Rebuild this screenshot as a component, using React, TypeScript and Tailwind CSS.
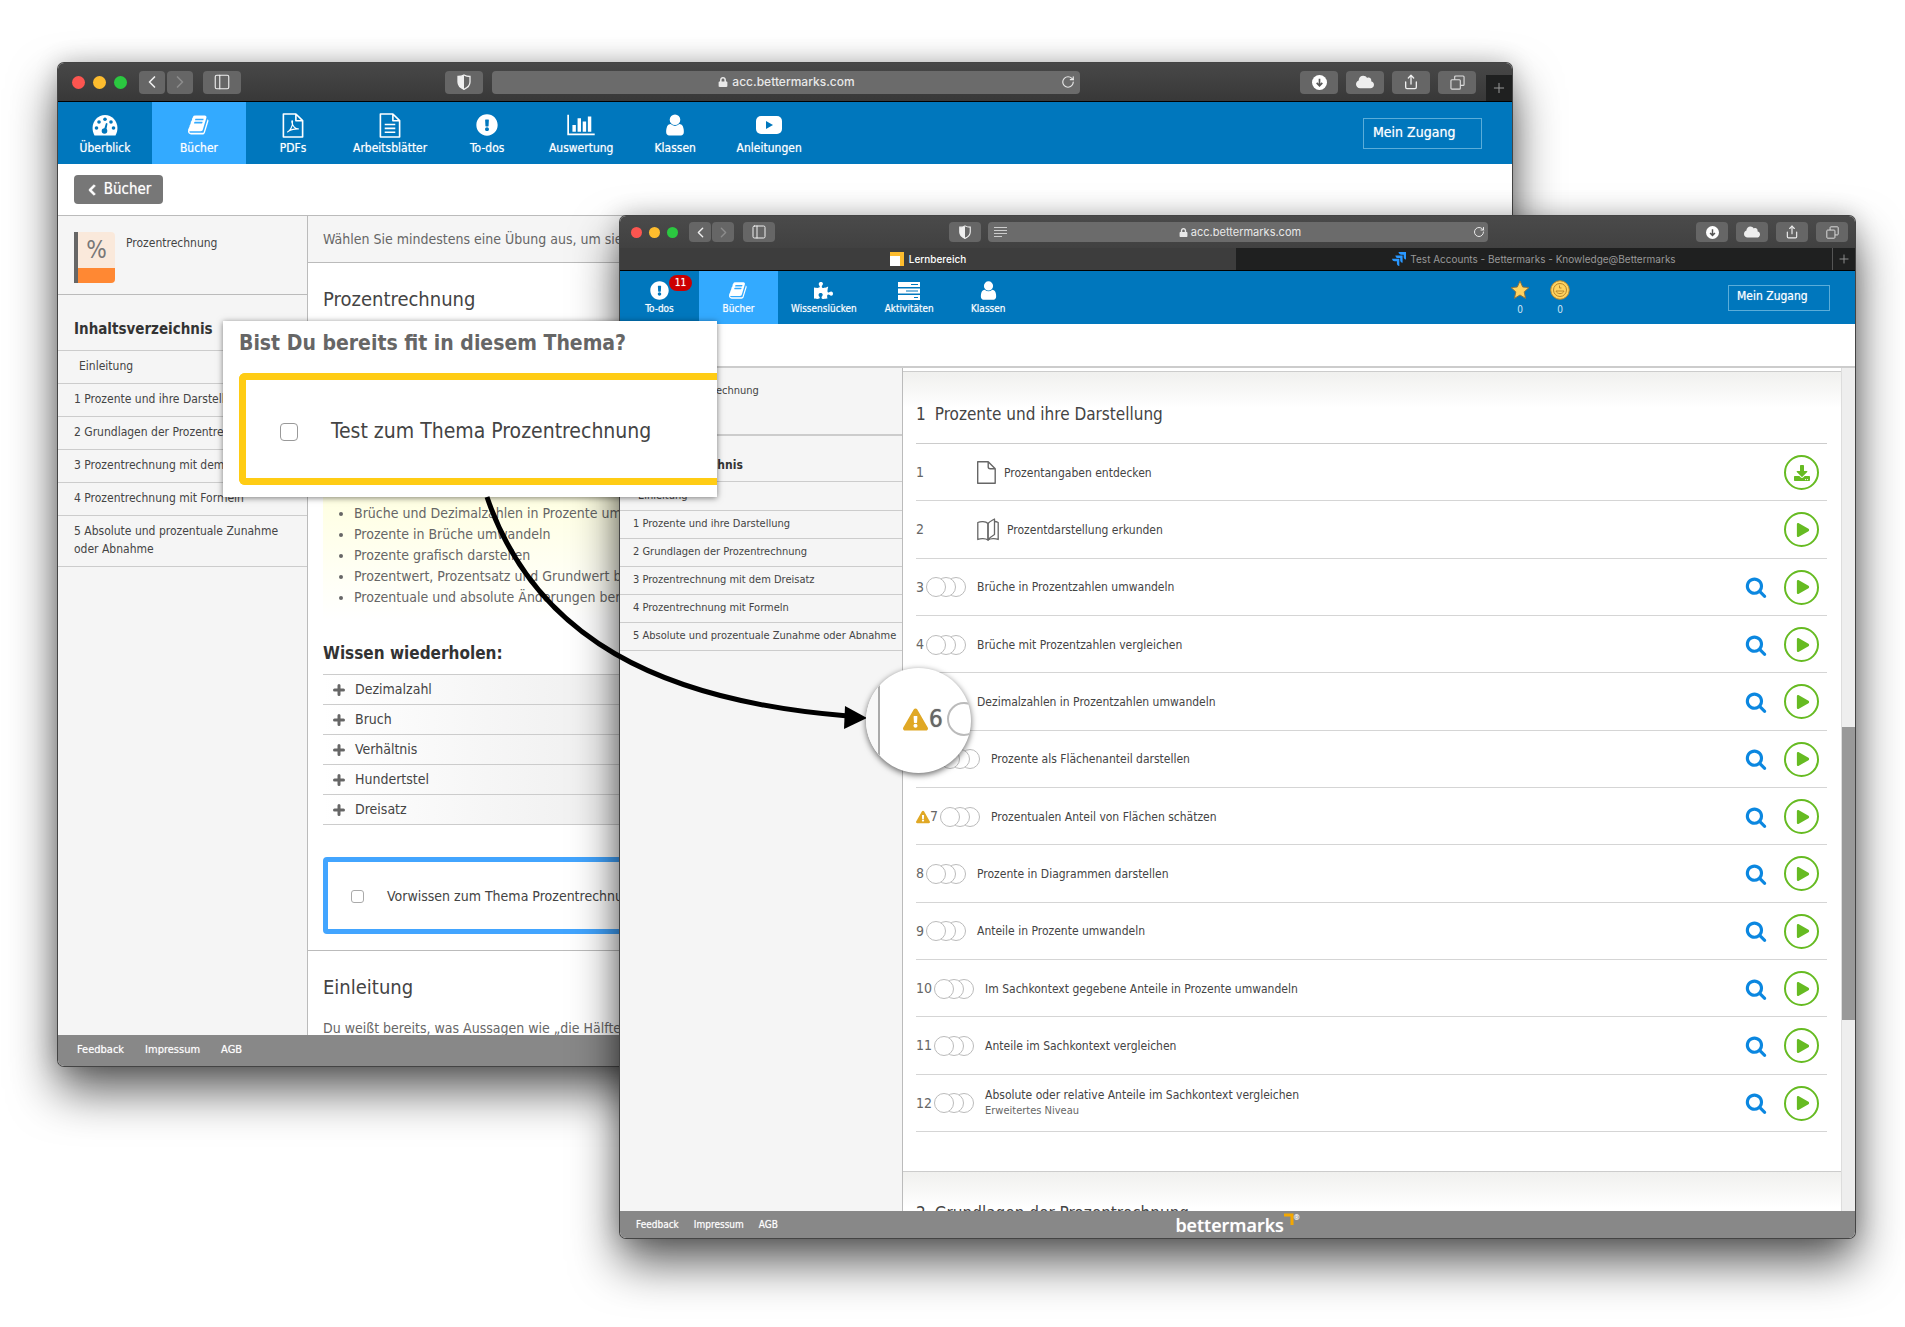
import type { ReactNode } from 'react';
import {
  FaChevronLeft,
  FaCloud,
  FaDownload,
  FaExclamationCircle,
  FaExclamationTriangle,
  FaLock,
  FaPlay,
  FaPuzzlePiece,
} from 'react-icons/fa';
import { ChevronLeft, ChevronRight, PanelLeft, Plus, RotateCw, Share } from 'lucide-react';

type NavItem = { label: string; icon: ReactNode; active?: boolean; badge?: string };

type Exercise = {
  nr: string;
  title: string;
  note?: string;
  kind?: 'file' | 'map';
  warning?: boolean;
};

const chapters = [
  '1 Prozente und ihre Darstellung',
  '2 Grundlagen der Prozentrechnung',
  '3 Prozentrechnung mit dem Dreisatz',
  '4 Prozentrechnung mit Formeln',
  '5 Absolute und prozentuale Zunahme oder Abnahme',
];

const goals = [
  'Brüche und Dezimalzahlen in Prozente umwandeln',
  'Prozente in Brüche umwandeln',
  'Prozente grafisch darstellen',
  'Prozentwert, Prozentsatz und Grundwert bestimmen',
  'Prozentuale und absolute Änderungen berechnen',
];

const topics = ['Dezimalzahl', 'Bruch', 'Verhältnis', 'Hundertstel', 'Dreisatz'];

const exercises: Exercise[] = [
  { nr: '1', title: 'Prozentangaben entdecken', kind: 'file' },
  { nr: '2', title: 'Prozentdarstellung erkunden', kind: 'map' },
  { nr: '3', title: 'Brüche in Prozentzahlen umwandeln' },
  { nr: '4', title: 'Brüche mit Prozentzahlen vergleichen' },
  { nr: '5', title: 'Dezimalzahlen in Prozentzahlen umwandeln' },
  { nr: '6', title: 'Prozente als Flächenanteil darstellen', warning: true },
  { nr: '7', title: 'Prozentualen Anteil von Flächen schätzen', warning: true },
  { nr: '8', title: 'Prozente in Diagrammen darstellen' },
  { nr: '9', title: 'Anteile in Prozente umwandeln' },
  { nr: '10', title: 'Im Sachkontext gegebene Anteile in Prozente umwandeln' },
  { nr: '11', title: 'Anteile im Sachkontext vergleichen' },
  { nr: '12', title: 'Absolute oder relative Anteile im Sachkontext vergleichen', note: 'Erweitertes Niveau' },
];

export default function App() {
  return (
    <div className="relative min-h-[1327px] overflow-hidden bg-white pt-[216px] pr-[50px] pb-[89px] pl-[620px] font-['DejaVu_Sans_Condensed','DejaVu_Sans',sans-serif] text-[#444]">
      <div className="absolute top-[63px] right-[393px] left-[58px]">
        <TeacherWindow />
      </div>
      <div className="relative">
        <StudentWindow />
      </div>
      <TestCallout />
      <Arrow />
      <Lens />
    </div>
  );
}

function TeacherWindow() {
  const items: NavItem[] = [
    { label: 'Überblick', icon: <GaugeIcon /> },
    { label: 'Bücher', icon: <BookIcon />, active: true },
    { label: 'PDFs', icon: <PdfIcon /> },
    { label: 'Arbeitsblätter', icon: <SheetIcon /> },
    { label: 'To-dos', icon: <FaExclamationCircle /> },
    { label: 'Auswertung', icon: <ChartIcon /> },
    { label: 'Klassen', icon: <UserIcon /> },
    { label: 'Anleitungen', icon: <VideoIcon /> },
  ];

  return (
    <div className="flex h-[1003px] flex-col overflow-hidden rounded-md bg-white shadow-[0_0_0_1px_#444,0_24px_48px_rgba(0,0,0,0.65),0_0_24px_rgba(0,0,0,0.2)]">
      <div className="flex h-[39px] shrink-0 items-center border-b border-black bg-linear-to-b from-[#484848] to-[#383838] pl-[14px]">
        <div className="flex gap-2">
          <span className="size-[13px] rounded-full bg-[#fc5550]" />
          <span className="size-[13px] rounded-full bg-[#fdbc2e]" />
          <span className="size-[13px] rounded-full bg-[#2bc840]" />
        </div>
        <div className="ml-3 flex gap-0.5">
          <ToolButton label="Zurück" size="h-[23px] w-[26px]"><ChevronLeft size={20} /></ToolButton>
          <ToolButton label="Vor" size="h-[23px] w-[26px]" dim><ChevronRight size={20} /></ToolButton>
        </div>
        <div className="ml-[10px]">
          <ToolButton label="Seitenleiste" size="h-[23px] w-[38px]"><PanelLeft size={18} strokeWidth={1.5} /></ToolButton>
        </div>
        <div className="ml-[204px]">
          <ToolButton label="Datenschutz" size="h-[23px] w-[38px]"><ShieldIcon size={16} /></ToolButton>
        </div>
        <div className="ml-[9px] flex h-[23px] flex-1 items-center rounded bg-[#6b6b6b] pr-[5px] pl-5 text-[#e8e8e8]">
          <div className="flex flex-1 items-center justify-center gap-1 font-['Inter',sans-serif] text-[12px] font-medium">
            <FaLock size={10} /> acc.bettermarks.com
          </div>
          <RotateCw size={14} strokeWidth={2} />
        </div>
        <div className="mr-[10px] ml-[220px] flex gap-2">
          <ToolButton label="Downloads" size="h-[23px] w-[38px]"><DownloadsIcon size={15} /></ToolButton>
          <ToolButton label="iCloud" size="h-[23px] w-[38px]"><FaCloud size={18} /></ToolButton>
          <ToolButton label="Teilen" size="h-[23px] w-[38px]"><Share size={16} strokeWidth={2} /></ToolButton>
          <ToolButton label="Tabs" size="h-[23px] w-[38px]"><TabsIcon size={15} /></ToolButton>
        </div>
        <button aria-label="Neuer Tab" className="flex h-[26px] w-[26px] items-center justify-center self-end bg-[#1f2020] text-[#999]">
          <Plus size={16} strokeWidth={1.5} />
        </button>
      </div>

      <nav className="flex h-[62px] shrink-0 items-center bg-[#0077bd] pr-[30px] text-white">
        {items.map((item) => (
          <a
            key={item.label}
            href="#"
            className={`flex h-full min-w-[94px] flex-col items-center gap-1 px-[13px] pt-[12px] text-[12px] leading-4 [text-shadow:0_0_1px_#fff9] ${item.active ? 'bg-[#33aaff]' : ''}`}
          >
            <span className="flex h-[22px] items-center text-[22px]">{item.icon}</span>
            {item.label}
          </a>
        ))}
        <button className="ml-auto h-[31px] w-[119px] border border-[#5badd9] pb-[3px] pl-[9px] text-left text-[14px] leading-4 [text-shadow:0_0_1px_#fff9]">Mein Zugang</button>
      </nav>

      <div className="flex h-[52px] shrink-0 items-center border-b border-[#bbb] pl-4">
        <button className="flex h-[29px] w-[89px] items-center justify-center gap-[6px] rounded bg-[#777] text-[15px] text-white [text-shadow:0_0_1px_#fff9]">
          <FaChevronLeft size={12} stroke="currentColor" strokeWidth={40} /> Bücher
        </button>
      </div>

      <div className="flex min-h-0 flex-1">
        <aside className="w-[250px] shrink-0 border-r border-[#bbb] bg-[#f5f5f5]">
          <div className="flex h-[79px] gap-[11px] border-b border-[#bbb] px-4 pt-4 text-[12px]">
            <span className="flex h-[51px] w-[41px] flex-col overflow-hidden rounded-r-sm border-l-4 border-[#666] bg-[#fae9db] text-center text-[24px] leading-9 text-[#777]">
              %
              <span className="flex-1 bg-[#ff8833]" />
            </span>
            <span className="pt-[3px] leading-4">Prozentrechnung</span>
          </div>
          <h2 className="border-b border-[#ccc] px-4 pt-[25px] pb-[11px] text-[15px] leading-[19px] font-bold text-[#333]">Inhaltsverzeichnis</h2>
          <ul className="text-[12px] leading-[18px]">
            <li className="border-b border-[#ccc] pt-[6px] pb-2 pl-[21px]"><a href="#">Einleitung</a></li>
            {chapters.map((chapter) => (
              <li key={chapter} className="border-b border-[#ccc] pt-[6px] pb-2 pr-2 pl-4"><a href="#">{chapter}</a></li>
            ))}
          </ul>
        </aside>
        <main className="min-w-0 flex-1 pl-[15px] whitespace-nowrap">
          <p className="-ml-[15px] h-[47px] border-b border-[#bbb] bg-[#f5f5f5] pl-[15px] text-[14px] leading-[46px] text-[#666]">
            Wählen Sie mindestens eine Übung aus, um sie Ihren Schülern zuzuweisen.
          </p>
          <h1 className="pt-[22px] text-[20px] leading-7">Prozentrechnung</h1>
          <div className="mt-[35px] bg-linear-to-b from-[#ffffdf] from-50% to-white pt-[155px] pb-3 pl-[31px]">
            <ul className="list-disc text-[14px] leading-[21px] text-[#666]">
              {goals.map((goal) => <li key={goal}>{goal}</li>)}
            </ul>
          </div>
          <h3 className="mt-[21px] text-[17px] leading-6 font-bold text-[#333]">Wissen wiederholen:</h3>
          <ul className="mt-[9px] border-t border-[#ccc] text-[14px]">
            {topics.map((topic) => (
              <li key={topic} className="h-[30px] border-b border-[#ccc] bg-linear-to-r from-white to-[#f2f2f2] to-20%">
                <button className="flex h-full items-center gap-[10px] pl-[10px]">
                  <PlusIcon /> {topic}
                </button>
              </li>
            ))}
          </ul>
          <label className="mt-8 mr-4 flex h-[77px] items-center gap-[23px] rounded border-[5px] border-[#42a5ff] pt-px pl-[23px] text-[14px]">
            <input type="checkbox" className="size-[13px] appearance-none rounded-[3px] border border-[#aaa] bg-white" />
            Vorwissen zum Thema Prozentrechnung
          </label>
          <h2 className="mt-4 -ml-[15px] border-t border-[#bbb] pt-[22px] pl-[15px] text-[20px] leading-7">Einleitung</h2>
          <p className="mt-[15px] text-[14px] leading-6 text-[#666]">Du weißt bereits, was Aussagen wie „die Hälfte aller Schüler“ bedeuten.</p>
        </main>
      </div>

      <footer className="flex h-[31px] shrink-0 items-center gap-[21px] bg-[#888] pl-[19px] text-[11px] text-white [text-shadow:0_0_1px_#fff9]">
        <a href="#">Feedback</a>
        <a href="#">Impressum</a>
        <a href="#">AGB</a>
      </footer>
    </div>
  );
}

function StudentWindow() {
  const items: NavItem[] = [
    { label: 'To-dos', icon: <FaExclamationCircle />, badge: '11' },
    { label: 'Bücher', icon: <BookIcon />, active: true },
    { label: 'Wissenslücken', icon: <FaPuzzlePiece /> },
    { label: 'Aktivitäten', icon: <RowsIcon /> },
    { label: 'Klassen', icon: <UserIcon /> },
  ];

  return (
    <div className="flex h-[1022px] flex-col overflow-hidden rounded-md bg-white shadow-[0_0_0_1px_#444,0_24px_48px_rgba(0,0,0,0.65),0_0_24px_rgba(0,0,0,0.2)]">
      <div className="flex h-8 shrink-0 items-center bg-linear-to-b from-[#4a4a4a] to-[#414141] pr-[7px] pl-[11px]">
        <div className="flex gap-[7px]">
          <span className="size-[11px] rounded-full bg-[#fc5550]" />
          <span className="size-[11px] rounded-full bg-[#fdbc2e]" />
          <span className="size-[11px] rounded-full bg-[#2bc840]" />
        </div>
        <div className="ml-[11px] flex gap-px">
          <ToolButton label="Zurück" size="h-5 w-[22px]"><ChevronLeft size={17} /></ToolButton>
          <ToolButton label="Vor" size="h-5 w-[22px]" dim><ChevronRight size={17} /></ToolButton>
        </div>
        <div className="ml-[9px]">
          <ToolButton label="Seitenleiste" size="h-5 w-8"><PanelLeft size={16} strokeWidth={1.5} /></ToolButton>
        </div>
        <div className="ml-[174px]">
          <ToolButton label="Datenschutz" size="h-5 w-8"><ShieldIcon size={14} /></ToolButton>
        </div>
        <div className="ml-[7px] flex h-5 flex-1 items-center rounded bg-[#6b6b6b] pr-[3px] pl-[6px] text-[#e8e8e8]">
          <LinesIcon />
          <div className="flex flex-1 items-center justify-center gap-[3px] font-['Inter',sans-serif] text-[11px]">
            <FaLock size={9} /> acc.bettermarks.com
          </div>
          <RotateCw size={12} strokeWidth={2} />
        </div>
        <div className="ml-[208px] flex gap-2">
          <ToolButton label="Downloads" size="h-5 w-8"><DownloadsIcon size={13} /></ToolButton>
          <ToolButton label="iCloud" size="h-5 w-8"><FaCloud size={16} /></ToolButton>
          <ToolButton label="Teilen" size="h-5 w-8"><Share size={14} strokeWidth={2} /></ToolButton>
          <ToolButton label="Tabs" size="h-5 w-8"><TabsIcon size={13} /></ToolButton>
        </div>
      </div>

      <div className="flex h-[23px] shrink-0 border-b border-black font-['Inter',sans-serif] text-[10px]">
        <button className="flex flex-[616] items-center justify-center gap-[5px] bg-[#3d3d3d] font-medium text-white">
          <svg className="size-[14px]" viewBox="0 0 14 14" aria-hidden="true">
            <rect width="14" height="14" fill="#fdbc2e" />
            <rect y="4" width="10" height="10" fill="#fff" />
          </svg>
          Lernbereich
        </button>
        <button className="flex flex-[596] items-center justify-center gap-1 bg-[#1f2020] text-[#999]">
          <svg className="size-[14px]" viewBox="0 0 14 14" fill="#2997ff" aria-hidden="true">
            <path d="M6.500 0H14v7.500c-1.800-.3-2.300-1.500-2.300-2.600V2.700H9.300C8 2.700 6.800 1.800 6.500 0zM3.300 3.400h7.300v7.400c-1.800-.3-2.400-1.500-2.400-2.600V6H5.900C4.600 6 3.600 5.100 3.300 3.400zM0 6.700h7.300V14c-1.800-.3-2.400-1.500-2.400-2.600V9.200H2.600C1.300 9.200.3 8.400 0 6.700z" />
          </svg>
          Test Accounts - Bettermarks - Knowledge@Bettermarks
        </button>
        <button aria-label="Neuer Tab" className="flex w-[23px] items-center justify-center border-l border-[#555] bg-[#1f2020] text-[#999]">
          <Plus size={14} strokeWidth={1.5} />
        </button>
      </div>

      <nav className="flex h-[53px] shrink-0 items-center bg-[#0077bd] pr-[25px] text-white">
        {items.map((item) => (
          <a
            key={item.label}
            href="#"
            className={`relative flex h-full min-w-[79px] flex-col items-center gap-[3px] px-[13px] pt-[10px] text-[10px] leading-3 [text-shadow:0_0_1px_#fff9] ${item.active ? 'bg-[#33aaff]' : ''}`}
          >
            <span className="flex h-[19px] items-center text-[19px]">{item.icon}</span>
            {item.label}
            {item.badge && (
              <span className="absolute top-1 right-[7px] flex h-4 w-[23px] items-center justify-center rounded-full bg-[#c00]">{item.badge}</span>
            )}
          </a>
        ))}
        <div className="mr-[158px] ml-auto flex gap-5 text-[10px] leading-3 text-[#cfe6f5]">
          <span className="flex w-5 flex-col items-center gap-1">
            <StarIcon />0
          </span>
          <span className="flex w-5 flex-col items-center gap-1">
            <CoinIcon />0
          </span>
        </div>
        <button className="h-[26px] w-[102px] border border-[#5badd9] pb-[3px] pl-2 text-left text-[12px] leading-4 [text-shadow:0_0_1px_#fff9]">Mein Zugang</button>
      </nav>

      <div className="h-[44px] shrink-0 border-b-2 border-[#ccc]" />

      <div className="flex min-h-0 flex-1">
        <aside className="w-[283px] shrink-0 border-r border-[#bbb] bg-[#f5f5f5]">
          <div className="h-[68px] border-b-2 border-[#ccc] pt-[15px] pl-[55px] text-[11px] leading-4">Prozentrechnung</div>
          <h2 className="border-b border-[#ccc] pt-5 pr-4 pb-[7px] pl-3 text-[12px] leading-[18px] font-bold text-[#333]">Inhaltsverzeichnis</h2>
          <ul className="text-[11px] leading-4">
            <li className="border-b border-[#ccc] py-[6px] pl-[18px]"><a href="#">Einleitung</a></li>
            {chapters.map((chapter) => (
              <li key={chapter} className="border-b border-[#ccc] pt-[5px] pb-[6px] pl-[13px] whitespace-nowrap"><a href="#">{chapter}</a></li>
            ))}
          </ul>
        </aside>
        <main className="min-w-0 flex-1">
          <section className="mt-[3px] border-t border-[#ccc] bg-linear-to-b from-[#f0f0ee] to-white to-[36px] pr-[14px] pl-[13px]">
            <h1 className="flex h-[72px] items-center gap-[9px] border-b border-[#ccc] pt-[15px] text-[17px]"><span>1</span>Prozente und ihre Darstellung</h1>
            <ul className="grid h-[688px] auto-rows-fr">
              {exercises.map((exercise) => <ExerciseRow key={exercise.nr} exercise={exercise} />)}
            </ul>
          </section>
          <section className="mt-[39px] border-t border-[#ccc] bg-linear-to-b from-[#f0f0ee] to-white to-[36px] pl-[13px]">
            <h1 className="flex h-[72px] items-center gap-[9px] pt-3 text-[17px]"><span>2</span>Grundlagen der Prozentrechnung</h1>
          </section>
        </main>
        <div className="w-[14px] shrink-0 border-l border-[#ddd] bg-[#eee] pt-[359px]">
          <div className="h-[293px] bg-[#999]" />
        </div>
      </div>

      <footer className="grid h-[27px] shrink-0 grid-cols-3 items-center bg-[#888] px-4 text-[10px] text-white [text-shadow:0_0_1px_#fff9]">
        <div className="flex gap-[15px]">
          <a href="#">Feedback</a>
          <a href="#">Impressum</a>
          <a href="#">AGB</a>
        </div>
        <div className="flex items-start justify-center font-['Open_Sans',sans-serif] text-[18px] leading-6 font-semibold">
          bettermarks
          <svg className="h-3 w-[10px]" viewBox="0 0 10 12" aria-hidden="true">
            <path d="M0 2H8V12" fill="none" stroke="#f5a800" strokeWidth="3" />
          </svg>
          <span className="text-[7px] leading-[10px]">®</span>
        </div>
      </footer>
    </div>
  );
}

function ExerciseRow({ exercise }: { exercise: Exercise }) {
  return (
    <li className="flex items-center border-b border-[#d5d5d5] pt-px pr-2">
      <div className={`flex shrink-0 items-center text-[14px] text-[#666] ${exercise.kind ? 'w-[61px]' : 'mr-[11px]'}`}>
        {exercise.warning && <FaExclamationTriangle size={14} className="text-[#e0a825]" />}
        {exercise.nr}
        {!exercise.kind && <Coins />}
      </div>
      {exercise.kind === 'file' && <span className="mr-2"><FileIcon /></span>}
      {exercise.kind === 'map' && <span className="mr-2"><MapIcon /></span>}
      <div className="flex-1 text-[12px] leading-4">
        {exercise.title}
        {exercise.note && <p className="text-[11px] text-[#666]">{exercise.note}</p>}
      </div>
      {!exercise.kind && (
        <button aria-label="Vorschau" className="mr-[17px] text-[#0b87e0]">
          <SearchIcon />
        </button>
      )}
      <button
        aria-label={exercise.kind === 'file' ? 'Herunterladen' : 'Starten'}
        className="flex size-[35px] items-center justify-center rounded-full border-2 border-[#66bb22] text-[#66bb22]"
      >
        {exercise.kind === 'file' ? <FaDownload size={16} /> : <FaPlay size={14} className="ml-[3px]" />}
      </button>
    </li>
  );
}

function TestCallout() {
  return (
    <div className="absolute top-[321px] left-[223px] h-[176px] w-[494px] bg-white pt-2 pl-4 shadow-[0_1px_6px_rgba(0,0,0,0.5)]">
      <h2 className="text-[21px] leading-7 font-bold text-[#666]">Bist Du bereits fit in diesem Thema?</h2>
      <label className="mt-4 flex h-[112px] items-center gap-[33px] rounded-l-md border-[7px] border-r-0 border-[#ffcc14] pt-[5px] pl-[34px] text-[21px]">
        <input type="checkbox" className="size-[18px] appearance-none rounded border border-[#999] bg-white" />
        Test zum Thema Prozentrechnung
      </label>
    </div>
  );
}

function Arrow() {
  return (
    <svg className="absolute top-[490px] left-[470px] h-[250px] w-[400px]" viewBox="0 0 400 250" aria-hidden="true">
      <path d="M17 7C65 148 190 211 378 226" fill="none" stroke="#000" strokeWidth="5" />
      <path d="M375 216L397 228L374 239Z" />
    </svg>
  );
}

// magnified part of the exercise list
function Lens() {
  return (
    <div className="absolute top-[668px] left-[866px] flex size-[105px] items-center overflow-hidden rounded-full bg-white pb-[3px] shadow-[0_2px_6px_rgba(0,0,0,0.6)]">
      <div className="h-[108px] w-[14px] shrink-0 border-r-2 border-[#aaa] bg-[#f8f8f8]" />
      <FaExclamationTriangle size={25} className="ml-[23px] shrink-0 text-[#e0a825]" />
      <span className="ml-px text-[24px] text-[#666] [text-shadow:0_0_1px_#666]">6</span>
      <span className="ml-1 size-[34px] shrink-0 rounded-full border-2 border-[#bbb]" />
    </div>
  );
}

function ToolButton({ label, size, dim, children }: { label: string; size: string; dim?: boolean; children: ReactNode }) {
  return (
    <button aria-label={label} className={`flex items-center justify-center rounded bg-[#666] ${dim ? 'text-[#8c8c8c]' : 'text-[#eee]'} ${size}`}>
      {children}
    </button>
  );
}

function Coins() {
  return (
    <svg className="ml-[2px] h-5 w-10" viewBox="0 0 40 20" fill="#fff" stroke="#bbb" aria-hidden="true">
      <circle cx="30" cy="10" r="9.500" />
      <circle cx="20" cy="10" r="9.500" />
      <circle cx="10" cy="10" r="9.500" />
    </svg>
  );
}

function PlusIcon() {
  return (
    <svg className="size-3" viewBox="0 0 12 12" stroke="#666" strokeWidth="3" strokeLinecap="round" aria-hidden="true">
      <path d="M6 1.500v9M1.500 6h9" />
    </svg>
  );
}

function BookIcon() {
  return (
    <svg width="1em" height="1em" viewBox="0 0 1792 1792" fill="currentColor" aria-hidden="true">
      <path d="M1639 478q40 57 18 129l-275 906q-19 64-76.500 107.500t-122.500 43.500h-923q-77 0-148.500-53.500t-99.500-131.500q-24-67-2-127 0-4 3-27t4-37q1-8-3-21.500t-3-19.500q2-11 8-21t16.500-23.500 16.500-23.500q23-38 45-91.500t30-91.500q3-10 .5-30t-.5-28q3-11 17-28t17-23q21-36 42-92t25-90q1-9-2.500-32t.5-28q4-13 22-30.500t22-22.500q19-26 42.500-84.500t27.500-96.500q1-8-3-25.500t-2-26.500q2-8 9-18t18-23 17-21q8-12 16.500-30.500t15-35 16-36 19.500-32 26.500-23.500 36-11.500 47.500 5.500l-1 3q38-9 51-9h761q74 0 114 56t18 130l-274 906q-36 119-71.500 153.500t-128.500 34.500h-869q-27 0-38 15-11 16-1 43 24 70 144 70h923q29 0 56-15.500t35-41.500l300-987q7-22 5-57 38 15 59 43zm-1064 2q-4 13 2 22.500t20 9.500h608q13 0 25.500-9.500t16.500-22.500l21-64q4-13-2-22.500t-20-9.500h-608q-13 0-25.500 9.500t-16.500 22.500zm-83 256q-4 13 2 22.500t20 9.500h608q13 0 25.500-9.500t16.500-22.500l21-64q4-13-2-22.500t-20-9.500h-608q-13 0-25.500 9.500t-16.500 22.500z" />
    </svg>
  );
}

function UserIcon() {
  return (
    <svg width="1em" height="1em" viewBox="100 100 1592 1592" fill="currentColor" aria-hidden="true">
      <path d="M1536 1399q0 109-62.500 187t-150.500 78h-854q-88 0-150.500-78t-62.500-187q0-85 8.500-160.500t31.500-152 58.500-131 94-89 134.500-34.500q131 128 313 128t313-128q76 0 134.500 34.500t94 89 58.500 131 31.500 152 8.500 160.500zm-256-887q0 159-112.500 271.500t-271.500 112.500-271.500-112.500-112.500-271.500 112.500-271.500 271.500-112.500 271.500 112.500 112.500 271.500z" />
    </svg>
  );
}

function ChartIcon() {
  return (
    <svg className="h-6 w-7" viewBox="0 0 2048 1792" fill="currentColor" aria-hidden="true">
      <path d="M640 896v512h-256v-512h256zm384-512v1024h-256v-1024h256zm1024 1152v128h-2048v-1536h128v1408h1920zm-640-896v768h-256v-768h256zm384-384v1152h-256v-1152h256z" />
    </svg>
  );
}

function SearchIcon() {
  return (
    <svg className="size-[22px]" viewBox="0 0 1792 1792" fill="currentColor" aria-hidden="true">
      <path d="M1216 832q0-185-131.500-316.500t-316.500-131.500-316.500 131.500-131.500 316.500 131.500 316.500 316.500 131.500 316.500-131.500 131.500-316.500zm512 832q0 52-38 90t-90 38q-54 0-90-38l-343-342q-179 124-399 124-143 0-273.500-55.500t-225-150-150-225-55.500-273.500 55.500-273.500 150-225 225-150 273.500-55.500 273.500 55.500 225 150 150 225 55.500 273.500q0 220-124 399l343 343q37 37 37 90z" />
    </svg>
  );
}

function GaugeIcon() {
  return (
    <svg className="h-[22px] w-[26px]" viewBox="0 0 26 22" aria-hidden="true">
      <path d="M2.500 21.500C-3 11 4 1 13 1s16 10 10.500 20.500z" fill="#fff" />
      <g fill="#0077bd">
        <circle cx="4.500" cy="14" r="1.800" />
        <circle cx="7" cy="8" r="1.800" />
        <circle cx="13" cy="5.300" r="1.800" />
        <circle cx="19" cy="8" r="1.800" />
        <circle cx="21.500" cy="14" r="1.800" />
        <circle cx="12.500" cy="17" r="2.800" />
        <path d="M11.500 17l2.500-8 1.500.4-1.500 8z" />
      </g>
    </svg>
  );
}

function PdfIcon() {
  return (
    <svg className="h-[25px] w-[22px]" viewBox="0 0 22 26" fill="none" stroke="currentColor" strokeWidth="1.700" strokeLinejoin="round" aria-hidden="true">
      <path d="M1 1h13l7 7v17H1zM14 1v7h7" />
      <path d="M5 20c3-1 6-7 5.500-11 0-1.500-1-1-.7.500C10.500 14 14 17 17 16.500M5.500 19.500C8 17.500 12 16.300 17 16.500" strokeWidth="1.200" />
    </svg>
  );
}

function SheetIcon() {
  return (
    <svg className="h-[25px] w-[22px]" viewBox="0 0 22 26" fill="none" stroke="currentColor" strokeWidth="1.700" strokeLinejoin="round" aria-hidden="true">
      <path d="M1 1h13l7 7v17H1zM14 1v7h7M5.500 12h11M5.500 16h11M5.500 20h11" />
    </svg>
  );
}

function VideoIcon() {
  return (
    <svg className="h-5 w-[26px]" viewBox="0 0 26 20" aria-hidden="true">
      <rect y="1" width="26" height="18" rx="5" fill="#fff" />
      <path d="M10 6l7 4-7 4z" fill="#0077bd" />
    </svg>
  );
}

function RowsIcon() {
  return (
    <svg className="h-[18px] w-[22px]" viewBox="0 0 22 18" aria-hidden="true">
      <path d="M0 0h22v5H0zM0 6.500h22v5H0zM0 13h22v5H0z" fill="#fff" />
      <path d="M13 2.500h7M8 9h12M16 15.500h4" stroke="#0077bd" strokeWidth="1.200" />
    </svg>
  );
}

function StarIcon() {
  return (
    <svg className="size-5" viewBox="0 0 20 20" aria-hidden="true">
      <path d="M10 1l2.700 6 6.300.6-4.800 4.300 1.400 6.500L10 15l-5.600 3.400 1.400-6.500L1 7.600 7.300 7z" fill="#ffd360" stroke="#8a7444" />
    </svg>
  );
}

function CoinIcon() {
  return (
    <svg className="size-5" viewBox="0 0 20 20" fill="none" stroke="#b8862c" aria-hidden="true">
      <circle cx="10" cy="10" r="9.300" fill="#ffd360" />
      <circle cx="10" cy="10" r="6.500" />
      <path d="M6 11c1 3.500 7 3.500 8 0zM9.500 5.500v2.500h2" />
    </svg>
  );
}

function FileIcon() {
  return (
    <svg className="h-[23px] w-[19px]" viewBox="0 0 19 23" fill="none" stroke="#666" strokeWidth="1.400" strokeLinejoin="round" aria-hidden="true">
      <path d="M.7.7h10.500l7 7v14.600H.7zM11.200.7v5q0 2 2 2h5" />
    </svg>
  );
}

function MapIcon() {
  return (
    <svg className="h-[23px] w-[22px]" viewBox="0 0 22 23" fill="none" stroke="#666" strokeWidth="1.300" strokeLinejoin="round" aria-hidden="true">
      <path d="M11 5.500C8.500 3 3.500 3.200 .8 4.500V21.500c2.700-1.300 7.700-1.300 10.200.5zM11 22c2.500-1.800 7.500-1.800 10.200-.5V4.500c-1.200-.6-2.200-.9-3.700-1" />
      <path d="M11 22V5.500C12.500 3.500 15 2.500 17.500 1V16.500C15 18 12.500 20 11 22z" />
    </svg>
  );
}

function ShieldIcon({ size }: { size: number }) {
  return (
    <svg width={size} height={size} viewBox="0 0 16 16" aria-hidden="true">
      <path d="M8 1c2 1.200 4 1.500 6 1.500V8c0 4-3 6-6 7.300C5 14 2 12 2 8V2.500C4 2.500 6 2.200 8 1z" fill="none" stroke="#eee" strokeWidth="1.300" />
      <path d="M8 1v14.300C5 14 2 12 2 8V2.500C4 2.500 6 2.200 8 1z" fill="#eee" />
    </svg>
  );
}

function DownloadsIcon({ size }: { size: number }) {
  return (
    <svg width={size} height={size} viewBox="0 0 16 16" aria-hidden="true">
      <circle cx="8" cy="8" r="8" fill="#fff" />
      <path d="M8 4v7M5 8.500l3 3 3-3" fill="none" stroke="#555" strokeWidth="1.800" />
    </svg>
  );
}

function TabsIcon({ size }: { size: number }) {
  return (
    <svg width={size} height={size} viewBox="0 0 16 16" fill="none" stroke="#ddd" strokeWidth="1.200" aria-hidden="true">
      <rect x="1" y="5" width="10" height="10" rx="1" />
      <path d="M5 5V2q0-1 1-1h8q1 0 1 1v8q0 1-1 1h-3" />
    </svg>
  );
}

function LinesIcon() {
  return (
    <svg className="h-[10px] w-[13px]" viewBox="0 0 13 10" stroke="#ccc" aria-hidden="true">
      <path d="M0 .5h13M0 3.500h13M0 6.500h13M0 9.500h8" />
    </svg>
  );
}
